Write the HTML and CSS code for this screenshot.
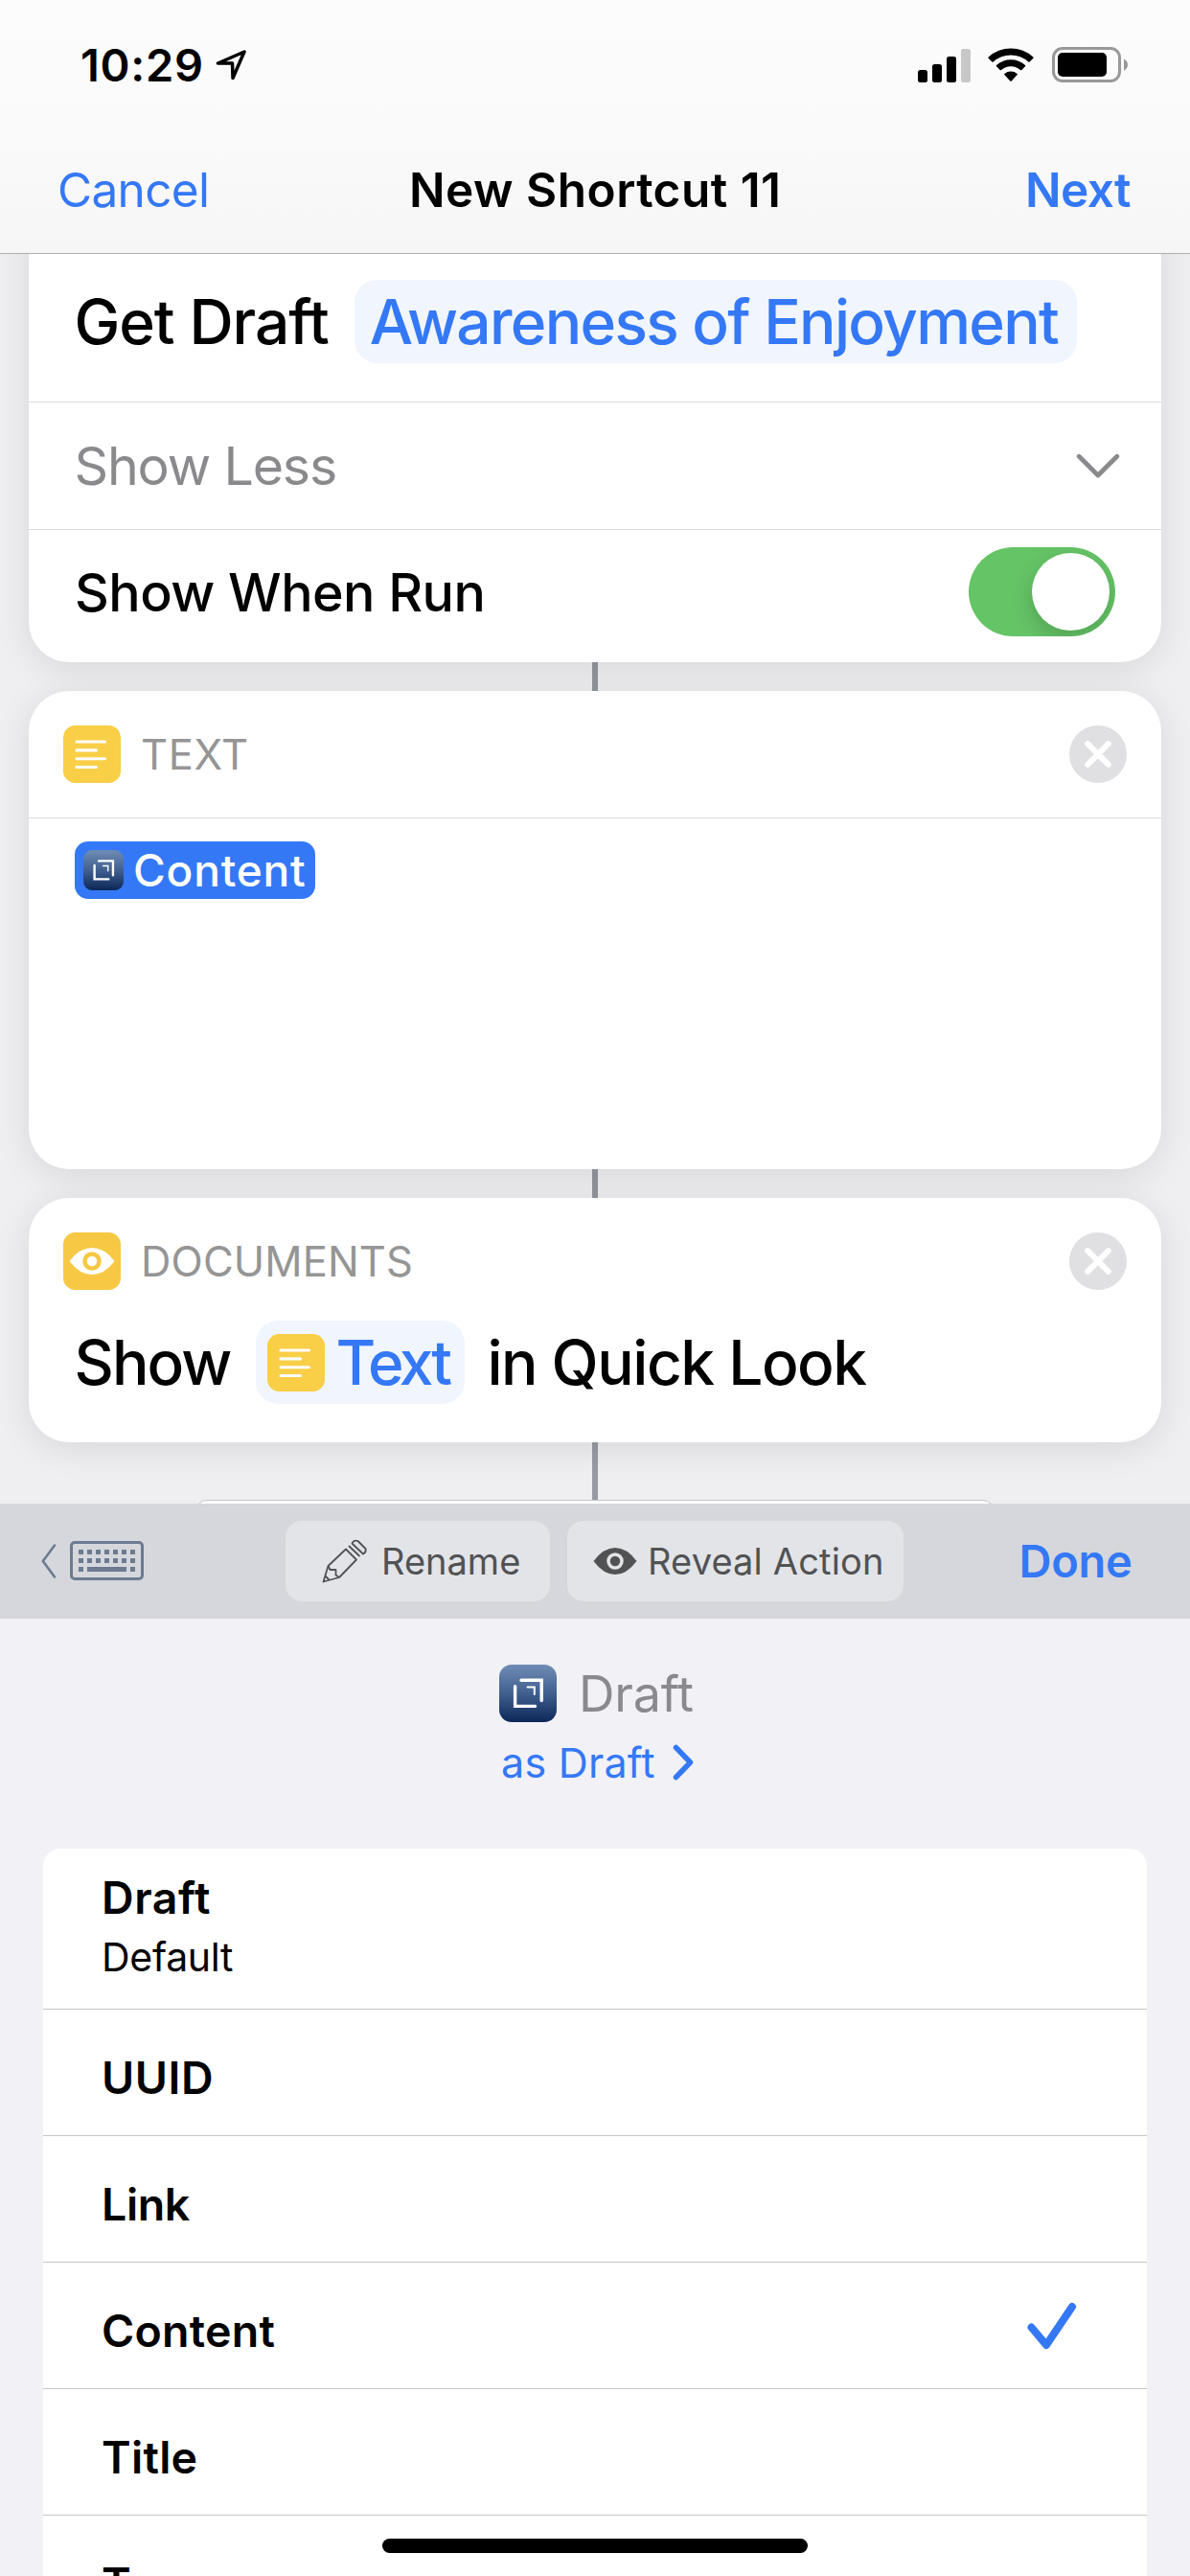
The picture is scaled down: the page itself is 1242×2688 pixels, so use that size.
FILE: index.html
```html
<!DOCTYPE html>
<html lang="en">
<head>
<meta charset="utf-8">
<title>New Shortcut 11</title>
<link rel="stylesheet" href="styles.css">
</head>
<body>
<svg class="defs" width="0" height="0" aria-hidden="true">
  <defs>
    <linearGradient id="drafts-blue" x1="0" y1="0" x2="0" y2="1">
      <stop offset="0" stop-color="#6f8cb5"/>
      <stop offset=".5" stop-color="#41608f"/>
      <stop offset="1" stop-color="#0b2757"/>
    </linearGradient>
    <symbol id="icon-drafts" viewBox="0 0 60 60">
      <rect width="60" height="60" rx="13" fill="url(#drafts-blue)"/>
      <path d="M23 16.3H44.2V37.5" fill="none" stroke="#fff" stroke-width="3.4" stroke-linecap="round"/>
      <path d="M16.6 22.8V43.4H37.5" fill="none" stroke="#fff" stroke-width="3.4" stroke-linecap="round"/>
      <path d="M29.5 23.6H36.8V31" fill="none" stroke="#fff" stroke-width="2" stroke-linecap="round"/>
    </symbol>
    <symbol id="icon-text" viewBox="0 0 60 60">
      <rect width="60" height="60" rx="12.5" fill="#f8cf46"/>
      <path d="M14 17H43.5M14 25.9H34.5M14 34.7H43.5M14 43.5H34.5" stroke="#fff" stroke-width="3.1" stroke-linecap="round"/>
    </symbol>
    <symbol id="icon-close" viewBox="0 0 60 60">
      <circle cx="30" cy="30" r="30" fill="#e0e0e2"/>
      <path d="M19.2 19.2L40.8 40.8M40.8 19.2L19.2 40.8" stroke="#fff" stroke-width="6" stroke-linecap="round"/>
    </symbol>
  </defs>
</svg>

<div class="screen">
  <header class="top">
    <div class="status">
      <span class="time">10:29</span>
      <svg class="location" width="36" height="36" viewBox="0 0 36 36"><path d="M32 4L4.500 16H19.500L20 31.500Z" fill="none" stroke="#000" stroke-width="3.500" stroke-linejoin="round"/></svg>
      <svg class="signal" width="56" height="36" viewBox="0 0 56 36"><rect x="0" y="23" width="10" height="13" rx="2.500"/><rect x="15" y="17" width="10" height="19" rx="2.500"/><rect x="30" y="9" width="10" height="27" rx="2.500"/><rect x="45" y="1" width="10" height="35" rx="2.500" fill="#c8c8c8"/></svg>
      <svg class="wifi" width="48" height="36" viewBox="0 0 48 36">
        <path d="M0.600 10.700Q0.100 10.100.700 9.500A34.500 34.500 0 0 1 47.300 9.500Q47.900 10.100 47.400 10.700L43.600 14.600Q43 15.200 42.300 14.600A27 27 0 0 0 5.700 14.600Q5 15.200 4.400 14.600Z"/>
        <path d="M9 19.200Q8.400 18.600 9 18A22.500 22.500 0 0 1 39 18Q39.600 18.600 39 19.200L35.300 23Q34.700 23.600 34 23A15 15 0 0 0 14 23Q13.300 23.600 12.700 23Z"/>
        <path d="M17.300 28Q16.700 27.400 17.400 26.900A10.500 10.500 0 0 1 30.600 26.900Q31.300 27.400 30.700 28L24.700 34.600Q24 35.400 23.300 34.600Z"/>
      </svg>
      <svg class="battery" width="80" height="38" viewBox="0 0 80 38"><rect x="1.500" y="1.500" width="69" height="34" rx="9.500" fill="none" stroke="#989898" stroke-width="3"/><rect x="6" y="6" width="51" height="25" rx="5"/><path d="M75 12.500Q79 14.500 79 18.500T75 24.800Z" fill="#989898"/></svg>
    </div>
    <nav class="nav">
      <span class="cancel">Cancel</span>
      <span class="title">New Shortcut 11</span>
      <span class="next">Next</span>
    </nav>
  </header>

  <main class="workspace">
    <section class="card card-draft">
      <div class="row sentence get-draft"><span>Get Draft</span><span class="token">Awareness of Enjoyment</span></div>
      <div class="row show-less"><span>Show Less</span>
        <svg width="46" height="27" viewBox="0 0 46 27"><path d="M3.200 3.200L23 23L42.800 3.200" fill="none" stroke="#8a8a8d" stroke-width="4.800" stroke-linecap="round" stroke-linejoin="round"/></svg>
      </div>
      <div class="row show-run"><span>Show When Run</span><span class="toggle"><span class="knob"></span></span></div>
    </section>
    <div class="connector"></div>
    <section class="card card-text">
      <div class="row card-head"><svg class="icon"><use href="#icon-text"/></svg><span class="kind kind-text">TEXT</span><svg class="icon close"><use href="#icon-close"/></svg></div>
      <div class="text-body"><span class="chip"><svg class="chip-icon"><use href="#icon-drafts"/></svg><span>Content</span></span></div>
    </section>
    <div class="connector"></div>
    <section class="card card-docs">
      <div class="row card-head"><svg class="icon" viewBox="0 0 60 60"><rect width="60" height="60" rx="12.500" fill="#f6c844"/><path d="M6.500 30Q17 16 30 16T53.500 30Q43 44 30 44T6.500 30Z" fill="#fff"/><circle cx="30" cy="30" r="7.500" fill="#fff" stroke="#f6c844" stroke-width="4.500"/></svg><span class="kind">DOCUMENTS</span><svg class="icon close"><use href="#icon-close"/></svg></div>
      <div class="row sentence quick-look"><span>Show</span><span class="token token-text"><svg class="icon"><use href="#icon-text"/></svg><span class="token-label">Text</span></span><span class="rest">in Quick Look</span></div>
    </section>
    <div class="connector connector-last"></div>
    <div class="search"></div>
  </main>

  <div class="toolbar">
    <svg class="keyboard" width="108" height="42" viewBox="0 0 108 42">
      <path d="M14 4.500L1.800 21L14 37.500" fill="none" stroke="#6c7b90" stroke-width="2.600" stroke-linecap="round" stroke-linejoin="round"/>
      <rect x="31.500" y="1.500" width="74" height="38" rx="3.500" fill="none" stroke="#6c7b90" stroke-width="3"/>
      <path d="M39 11.500H99M39 20.500H99" stroke="#6c7b90" stroke-width="5" stroke-dasharray="5 4"/>
      <path d="M39 29.500H44M48 29.500H89M93 29.500H98" stroke="#6c7b90" stroke-width="5"/>
    </svg>
    <div class="tool rename">
      <svg width="48" height="46" viewBox="0 0 48 46" fill="none" stroke="#515254" stroke-width="1.800" stroke-linejoin="round"><path d="M1.500 44.500L6.500 28L25 10.500L36 21.500L18 40Z"/><path d="M6.500 28L8.500 32H14.500V37.500L18 40M3.500 38.500L7.500 42.500"/><path d="M28 7L39.500 18M33.500 6.500L43 15.500Q46.500 14 45.500 10L37.500 2Q33 .500 31.500 4.500Z"/></svg>
      <span>Rename</span>
    </div>
    <div class="tool reveal">
      <svg width="46" height="28" viewBox="0 0 46 28"><path d="M.500 14Q11 0 23 0T45.500 14Q35 28 23 28T.500 14Z" fill="#515254"/><circle cx="23" cy="14" r="7" fill="#515254" stroke="#e3e4e8" stroke-width="3.500"/></svg>
      <span>Reveal Action</span>
    </div>
    <span class="done">Done</span>
  </div>

  <section class="panel">
    <div class="variable"><svg class="icon"><use href="#icon-drafts"/></svg><span>Draft</span></div>
    <div class="as-type"><span>as Draft</span><svg width="22" height="38" viewBox="0 0 22 38"><path d="M3.500 3.500L18.500 19L3.500 34.500" fill="none" stroke="#3478f6" stroke-width="5.500" stroke-linecap="round" stroke-linejoin="round"/></svg></div>
    <div class="list">
      <div class="item item-first"><span class="name">Draft</span><span class="sub">Default</span></div>
      <div class="item"><span class="uuid">UUID</span></div>
      <div class="item"><span class="link">Link</span></div>
      <div class="item"><span>Content</span><svg class="check" width="52" height="50" viewBox="0 0 52 50"><path d="M4.500 26.500L20 45L47 5" fill="none" stroke="#3478f6" stroke-width="8" stroke-linecap="round" stroke-linejoin="round"/></svg></div>
      <div class="item"><span>Title</span></div>
      <div class="item"><span>Tags</span></div>
    </div>
  </section>
  <div class="home-indicator"></div>
</div>
</body>
</html>
```
FILE: styles.css
```css
* { box-sizing: border-box; }

body {
  margin: 0;
  font-family: Inter, "Liberation Sans", sans-serif;
  color: #000;
}

svg { display: block; flex: none; }
.defs { position: absolute; }

.screen {
  position: relative;
  width: 1242px;
  height: 2688px;
  overflow: hidden;
  display: flex;
  flex-direction: column;
  background: #efeff1;
  white-space: nowrap;
}

/* Status bar and navigation */
.top {
  flex: none;
  height: 265px;
  border-bottom: 1px solid #b0b0b2;
  background: linear-gradient(#fcfcfc, #fafafa 55%, #f6f6f7);
}

.status {
  height: 132px;
  padding: 3px 64px 0 84px;
  display: flex;
  align-items: center;
}

.time {
  width: 139px;
  padding-bottom: 1px;
  font-size: 47px;
  font-weight: 600;
  letter-spacing: .71px;
}

.signal { margin-left: auto; }
.wifi { margin-left: 17px; }
.battery { margin-left: 19px; }

.nav {
  height: 132px;
  padding: 0 59px 0 60px;
  display: flex;
  align-items: center;
  font-size: 49.500px;
}

.cancel { width: 367px; letter-spacing: -.67px; color: #3478f6; }
.title { font-weight: 600; letter-spacing: .48px; }
.next { width: 113px; margin-left: auto; font-weight: 600; letter-spacing: -.59px; color: #3478f6; }

/* Action cards */
.workspace {
  flex: none;
  height: 1304px;
  overflow: hidden;
  display: flex;
  flex-direction: column;
  align-items: center;
}

.card {
  position: relative;
  flex: none;
  width: 1182px;
  border-radius: 42px;
  background: #fff;
  box-shadow: 0 6px 36px rgba(0, 0, 0, .1);
}

.row { display: flex; align-items: center; }

.card-draft { height: 486px; margin-top: -60px; padding-top: 60px; }

.sentence { font-size: 64px; font-weight: 500; }

.get-draft {
  height: 155px;
  padding: 0 0 13px 47.500px;
  letter-spacing: -1.090px;
  border-bottom: 1px solid #dcdcde;
}

.token {
  width: 754px;
  height: 87px;
  margin-left: 27px;
  padding-left: 16px;
  display: flex;
  align-items: center;
  border-radius: 24px;
  background: #f0f5fe;
  color: #3478f6;
  letter-spacing: -1.700px;
}

.show-less {
  height: 133px;
  padding: 0 43px 0 47.500px;
  justify-content: space-between;
  border-bottom: 1px solid #dcdcde;
  font-size: 55.500px;
  letter-spacing: -1.160px;
  color: #8a8a8d;
}
.show-less span { padding-bottom: 2px; }

.show-run {
  height: 134px;
  padding: 0 48px 5px 48px;
  justify-content: space-between;
  font-size: 55.500px;
  font-weight: 500;
  letter-spacing: -.53px;
}

.toggle {
  width: 153px;
  height: 93px;
  padding: 6px;
  border-radius: 47px;
  display: flex;
  justify-content: flex-end;
  overflow: hidden;
  background: #65c466;
}

.knob {
  width: 81px;
  height: 81px;
  border-radius: 50%;
  background: #fff;
  box-shadow: 0 8px 22px rgba(0, 0, 0, .18);
}

.connector {
  flex: none;
  width: 6px;
  height: 30px;
  background: #93969e;
}

.connector-last { height: 60px; background: #989ba2; }

.icon { width: 60px; height: 60px; }
.close { margin-left: auto; }

.card-head { height: 132px; padding: 0 36px; }

.kind {
  margin-left: 21px;
  font-size: 43.500px;
  letter-spacing: .11px;
  color: #959595;
}
.kind-text { letter-spacing: .6px; }

.card-text { height: 499px; }
.card-text .card-head { height: 133px; border-bottom: 1px solid #dcdcde; }

.text-body { padding: 24px 48px; }

.chip {
  width: 251px;
  height: 60px;
  padding-left: 9px;
  display: flex;
  align-items: center;
  gap: 10px;
  border-radius: 14px;
  background: #3478f6;
  color: #fff;
  font-size: 46px;
  font-weight: 500;
  letter-spacing: .82px;
}

.chip-icon { width: 42px; height: 42px; }

.card-docs { height: 255px; }

.quick-look { height: 79px; padding-left: 47.500px; letter-spacing: -1.900px; }
.token-text { width: 218px; padding-left: 12px; }
.token-label { margin-left: 11px; letter-spacing: -3.300px; }
.rest { margin-left: 23px; letter-spacing: -1.500px; }

.search {
  flex: none;
  width: 834px;
  height: 150px;
  border: 1px solid #c4c4c6;
  border-radius: 12px;
  background: #fff;
}

/* Variable toolbar */
.toolbar {
  flex: none;
  height: 120px;
  padding-left: 43px;
  display: flex;
  align-items: center;
  background: #d5d7dc;
}

.tool {
  height: 84px;
  display: flex;
  align-items: center;
  border-radius: 17px;
  background: #e3e4e8;
  color: #515254;
  font-size: 38px;
}

.rename { width: 276px; margin-left: 147px; padding-left: 38px; gap: 14px; }
.reveal { width: 351px; margin-left: 18px; padding-left: 27px; gap: 11px; letter-spacing: .16px; }

.done {
  margin-left: 120.500px;
  padding-bottom: 2px;
  font-size: 47px;
  font-weight: 600;
  letter-spacing: -.27px;
  color: #3478f6;
}

/* Variable panel */
.panel {
  flex: none;
  height: 999px;
  padding-top: 48px;
  background: #f1f1f6;
}

.variable {
  height: 60px;
  padding-left: 521px;
  display: flex;
  align-items: center;
  gap: 23px;
  font-size: 52px;
  letter-spacing: -.19px;
  color: #8a8a8e;
}

.as-type {
  height: 60px;
  margin-top: 12px;
  padding-left: 523px;
  display: flex;
  align-items: center;
  gap: 18px;
  font-size: 43px;
  letter-spacing: .25px;
  color: #3478f6;
}

.list {
  width: 1152px;
  margin: 60px auto 0;
  border-radius: 18px 18px 0 0;
  background: #fff;
}

.item {
  height: 132px;
  padding: 10px 74px 0 61px;
  display: flex;
  align-items: center;
  justify-content: space-between;
  border-bottom: 1px solid #c6c6c8;
  font-size: 46.500px;
  font-weight: 600;
  letter-spacing: .26px;
}

.item-first {
  height: 168px;
  padding-top: 20px;
  flex-direction: column;
  align-items: flex-start;
  justify-content: flex-start;
}

.name { line-height: 62px; letter-spacing: .59px; }
.sub { line-height: 62px; font-size: 41px; font-weight: 400; letter-spacing: -.3px; }
.uuid { letter-spacing: .56px; }
.link { letter-spacing: -.4px; }
.check { margin: -9px -1px 0 0; }

.home-indicator {
  position: absolute;
  left: 399px;
  bottom: 24px;
  width: 444px;
  height: 15px;
  border-radius: 8px;
  background: #000;
}
```
